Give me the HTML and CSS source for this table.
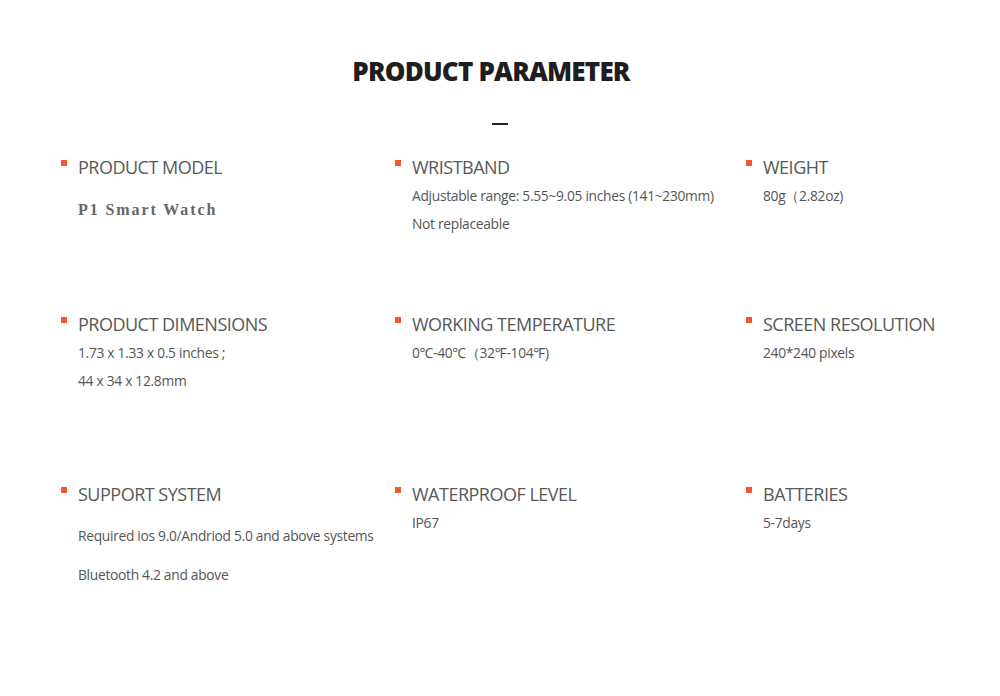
FILE: index.html
```html
<!DOCTYPE html>
<html>
<head>
<meta charset="utf-8">
<link rel="stylesheet" href="styles.css">
</head>
<body>
<div class="page">
  <h1 class="title">PRODUCT PARAMETER</h1>
  <div class="dash"></div>
  <div class="grid">
    <div class="item">
      <h2 class="head">PRODUCT MODEL</h2>
      <p class="model">P1 Smart Watch</p>
    </div>
    <div class="item">
      <h2 class="head">WRISTBAND</h2>
      <p class="txt">Adjustable range: 5.55~9.05 inches (141~230mm)</p>
      <p class="txt">Not replaceable</p>
    </div>
    <div class="item">
      <h2 class="head">WEIGHT</h2>
      <p class="txt">80g（2.82oz)</p>
    </div>
    <div class="item">
      <h2 class="head">PRODUCT DIMENSIONS</h2>
      <p class="txt">1.73 x 1.33 x 0.5 inches ;</p>
      <p class="txt">44 x 34 x 12.8mm</p>
    </div>
    <div class="item">
      <h2 class="head">WORKING TEMPERATURE</h2>
      <p class="txt">0℃-40℃（32℉-104℉)</p>
    </div>
    <div class="item">
      <h2 class="head">SCREEN RESOLUTION</h2>
      <p class="txt">240*240 pixels</p>
    </div>
    <div class="item">
      <h2 class="head">SUPPORT SYSTEM</h2>
      <p class="txt wide first">Required ios 9.0/Andriod 5.0 and above systems</p>
      <p class="txt wide">Bluetooth 4.2 and above</p>
    </div>
    <div class="item">
      <h2 class="head">WATERPROOF LEVEL</h2>
      <p class="txt">IP67</p>
    </div>
    <div class="item">
      <h2 class="head">BATTERIES</h2>
      <p class="txt">5-7days</p>
    </div>
  </div>
</div>
</body>
</html>
```
FILE: styles.css
```css
* { box-sizing: border-box; }
html, body { margin: 0; padding: 0; background: #fff; }
body { font-family: "Open Sans", "Noto Sans", sans-serif; color: #555; }
.page { width: 1000px; height: 696px; padding-top: 55px; }
.title {
  margin: 0;
  text-align: center;
  font-size: 26px;
  font-weight: 800;
  color: #1e1e1e;
  line-height: 32px;
  letter-spacing: -0.8px;
  transform: translateX(-9px);
}
.dash { width: 16px; height: 2px; background: #222; margin: 36px auto 0; }
.grid {
  margin-top: 31px;
  padding-left: 61px;
  display: grid;
  grid-template-columns: 334px 351px 1fr;
  grid-template-rows: 157px 170px auto;
}
.item { position: relative; padding-left: 17px; }
.item::before {
  content: "";
  position: absolute;
  left: 0;
  top: 4px;
  width: 6px;
  height: 6px;
  background: #f0582a;
}
.head {
  margin: 0;
  font-size: 18px;
  font-weight: 400;
  line-height: 22px;
  color: #585858;
  letter-spacing: -0.5px;
}
.txt {
  margin: 0;
  font-size: 13.8px;
  line-height: 28px;
  color: #555;
  letter-spacing: -0.3px;
}
.head + .txt { margin-top: 4px; }
.head + .txt.first { margin-top: 17px; }
.txt.wide + .txt.wide { margin-top: 11px; }
.model {
  margin: 20px 0 0;
  font-family: "Liberation Serif", serif;
  font-weight: 700;
  font-size: 16px;
  letter-spacing: 1.9px;
  color: #666;
  line-height: 24px;
}
```
